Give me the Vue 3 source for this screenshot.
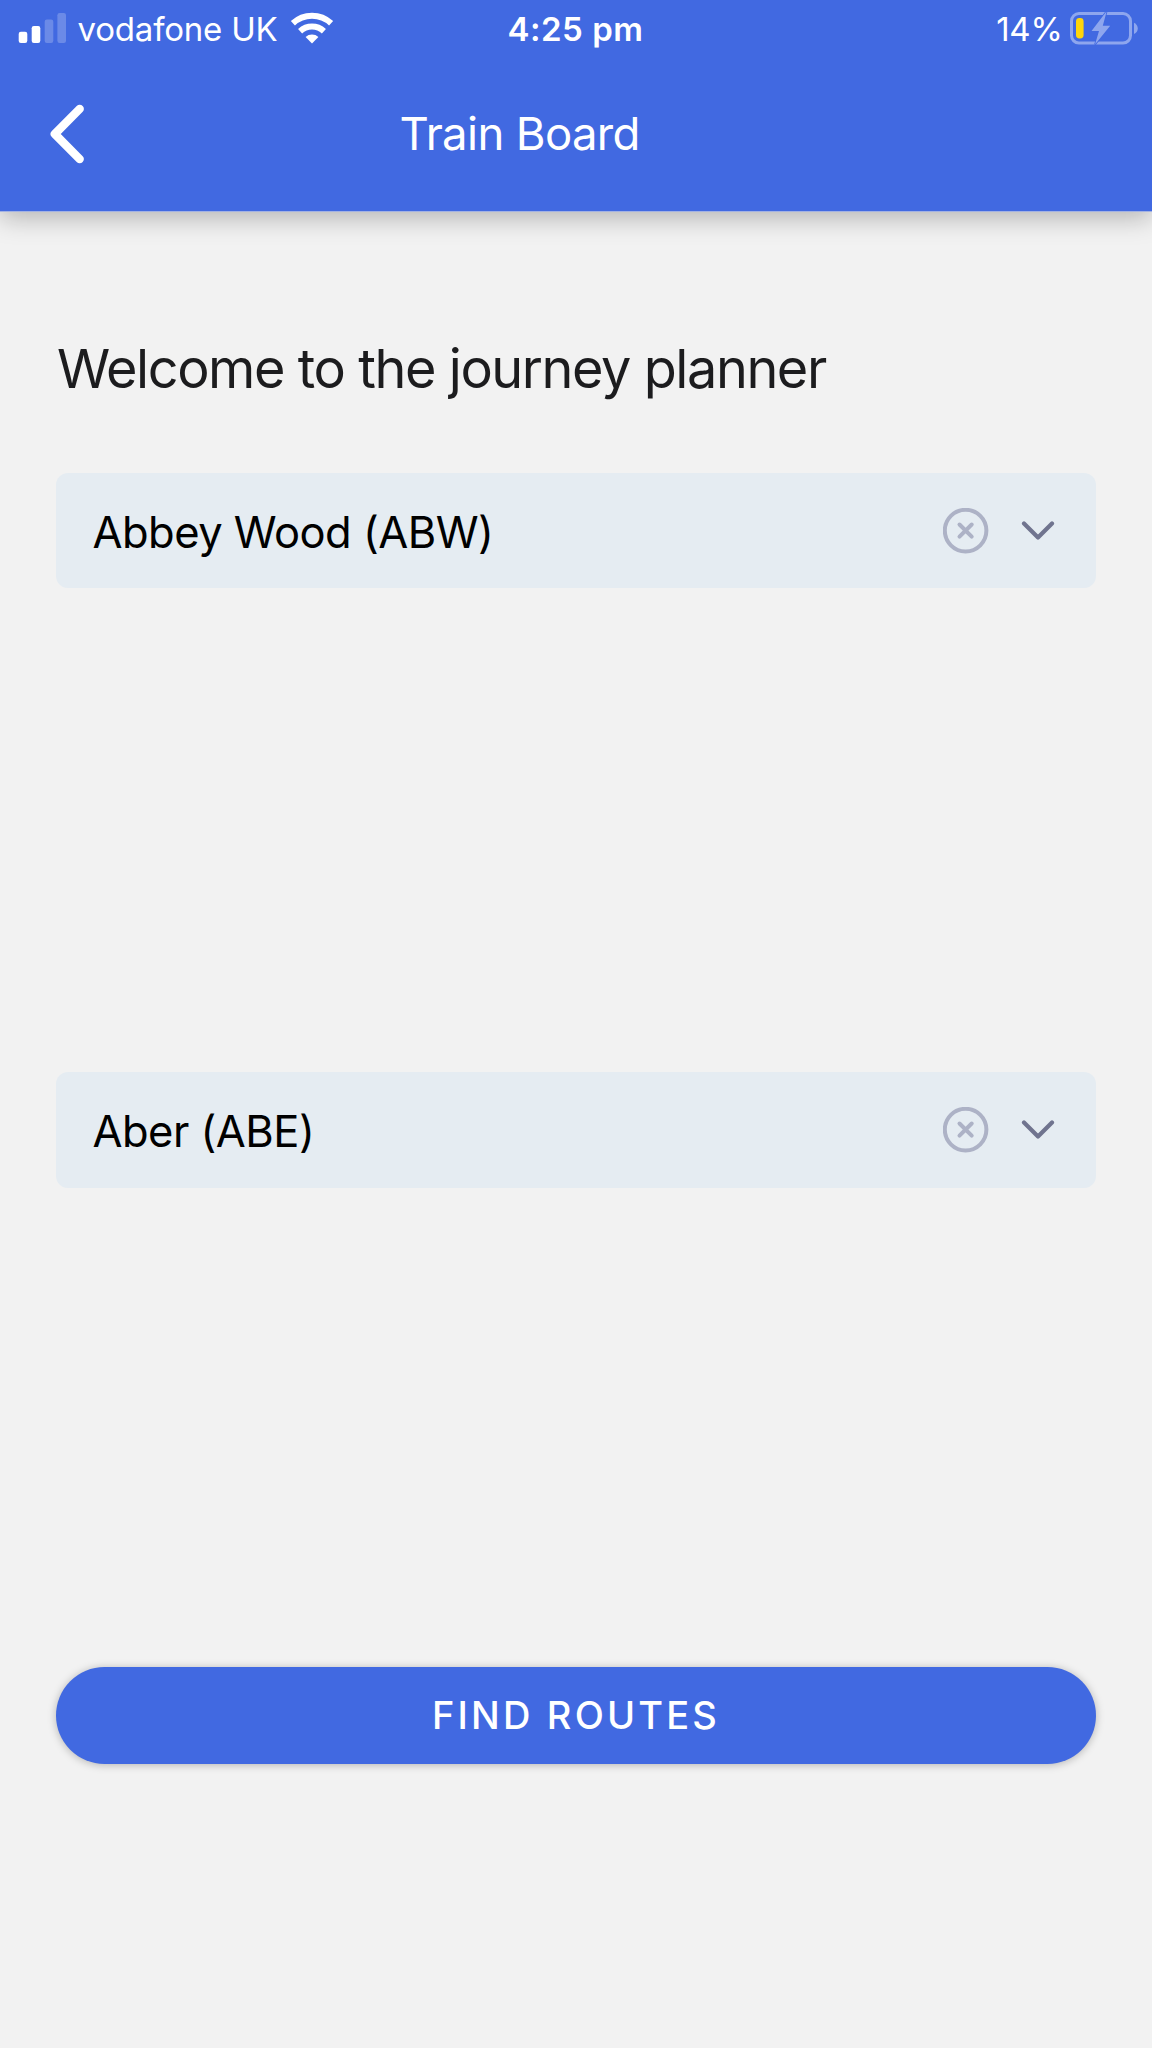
<script setup>
import { ref } from 'vue'

const stations = ref([
  { id: 'from', name: 'Abbey Wood (ABW)' },
  { id: 'to', name: 'Aber (ABE)' },
])
</script>

<template>
  <div class="screen">
    <header class="header">
      <div class="status">
        <div class="status-left">
          <svg class="signal" width="48" height="31" viewBox="0 0 48 31">
            <g fill="#fff">
              <rect x="0.7" y="18.7" width="8.6" height="11.3" rx="2.2" />
              <rect x="13.7" y="13" width="8.6" height="17" rx="2.2" />
              <g opacity="0.22">
                <rect x="26.7" y="6.5" width="8.6" height="23.5" rx="2.2" />
                <rect x="39.4" y="0" width="8.6" height="30" rx="2.2" />
              </g>
            </g>
          </svg>
          <span class="carrier">vodafone UK</span>
          <svg class="wifi" width="44" height="32" viewBox="0 0 44 32">
            <g fill="none" stroke="#fff" stroke-width="6">
              <path d="M2.9 11.2A28 28 0 0 1 41.1 11.2" />
              <path d="M10.1 19.2A17.5 17.5 0 0 1 33.9 19.2" />
            </g>
            <path d="M22 31.5L15.6 25.1A9.5 9.5 0 0 1 28.4 25.1Z" fill="#fff" />
          </svg>
        </div>
        <span class="time">4:25 pm</span>
        <div class="status-right">
          <span class="percent">14%</span>
          <svg class="battery" width="68" height="33" viewBox="0 0 68 33">
            <rect x="1.5" y="1.5" width="59" height="29.6" rx="7.5" fill="none" stroke="#8ea6ee" stroke-width="3" />
            <path d="M64 10.7C69 13 69 19.8 64 22Z" fill="#8ea6ee" />
            <rect x="6" y="6" width="7.6" height="20.5" rx="3.4" fill="#ffd60a" />
            <path d="M36 0L21.5 19H29L25 32.6L40.2 13.7H32.8L36.5 0Z" fill="#8ea6ee" stroke="#4169e1" stroke-width="1.6" paint-order="stroke" />
          </svg>
        </div>
      </div>
      <nav class="nav">
        <button class="back" aria-label="Back">
          <svg width="34" height="60" viewBox="0 0 34 60">
            <path d="M29.7 4.9L4.8 30L29.7 55.1" fill="none" stroke="#fff" stroke-width="8.4" stroke-linecap="round" stroke-linejoin="round" />
          </svg>
        </button>
        <h1 class="title">Train Board</h1>
      </nav>
    </header>

    <main class="content">
      <h2 class="welcome">Welcome to the journey planner</h2>
      <div v-for="s in stations" :key="s.id" class="slot" :class="s.id">
        <div class="field">
          <span class="station">{{ s.name }}</span>
          <svg class="clear" width="46" height="46" viewBox="0 0 46 46">
            <g fill="none" stroke="#adb2c6" stroke-width="4" stroke-linecap="round">
              <circle cx="22.6" cy="22.6" r="20.8" />
              <path d="M16.5 16.5L28.7 28.7M28.7 16.5L16.5 28.7" />
            </g>
          </svg>
          <svg class="chevron" width="34" height="20" viewBox="0 0 34 20">
            <path d="M3 2.6L17 16.6L31 2.6" fill="none" stroke="#70748f" stroke-width="4.2" stroke-linecap="round" stroke-linejoin="round" />
          </svg>
        </div>
      </div>
      <button class="find">FIND ROUTES</button>
    </main>
  </div>
</template>

<style>
body {
  margin: 0;
  background: #f2f2f2;
}
</style>

<style scoped>
.screen {
  width: 1152px;
  height: 2048px;
  overflow: hidden;
  background: #f2f2f2;
  font-family: Inter, "Liberation Sans", sans-serif;
}
button {
  border: 0;
  padding: 0;
  font-family: inherit;
}
.header {
  height: 212px;
  box-sizing: border-box;
  border-bottom: 1px solid #a3b2e3;
  background: #4169e1;
  background-clip: padding-box;
  color: #fff;
  box-shadow: 0 6px 24px rgba(0, 0, 0, 0.26);
}
.status {
  display: grid;
  grid-template-columns: 1fr auto 1fr;
  align-items: center;
  height: 58px;
  padding: 0 14px 0 18px;
  font-size: 33px;
  line-height: 58px;
  white-space: nowrap;
}
.status-left,
.status-right {
  display: flex;
  align-items: center;
}
.status-right {
  justify-content: flex-end;
}
.signal {
  margin-top: -2px;
}
.carrier {
  width: 199px;
  margin-left: 11.5px;
  letter-spacing: -0.2px;
}
.wifi {
  margin: -3px 0 0 13px;
}
.time {
  margin: 0 2.5px 0 -2.5px;
  font-weight: 600;
  letter-spacing: 0.5px;
}
.percent {
  letter-spacing: -0.3px;
  margin-right: 7.5px;
}
.battery {
  margin-top: -2px;
}
.nav {
  display: flex;
  align-items: center;
  height: 152px;
}
.back {
  display: flex;
  margin-left: 50px;
  background: none;
}
.title {
  margin: -2px 0 0 315.5px;
  font-size: 45.5px;
  font-weight: 400;
  letter-spacing: -0.65px;
  white-space: nowrap;
}
.content {
  display: flex;
  flex-direction: column;
  padding: 125px 56px 0;
}
.welcome {
  height: 64px;
  margin: 0;
  padding-left: 1px;
  font-size: 54px;
  font-weight: 400;
  line-height: 63px;
  letter-spacing: -1.43px;
  color: #1c1c1e;
  white-space: nowrap;
}
.slot {
  height: 599px;
}
.from {
  margin-top: 72px;
}
.to {
  height: 595px;
}
.field {
  display: flex;
  align-items: center;
  height: 115px;
  box-sizing: border-box;
  padding: 0 41px 0 36.5px;
  border-radius: 12px;
  background: #e5ecf2;
}
.to .field {
  height: 116px;
}
.station {
  flex: 1;
  padding-top: 3px;
  font-size: 43.5px;
  letter-spacing: -0.52px;
  color: #000;
  white-space: nowrap;
}
.to .station {
  padding-top: 1px;
}
.chevron {
  margin-left: 32px;
}
.find {
  height: 97px;
  padding-bottom: 2px;
  border-radius: 49px;
  background: #4169e1;
  box-shadow: 0 1px 8px rgba(0, 0, 0, 0.26);
  color: #fff;
  font-size: 38px;
  font-weight: 450;
  letter-spacing: 3.15px;
}
</style>
